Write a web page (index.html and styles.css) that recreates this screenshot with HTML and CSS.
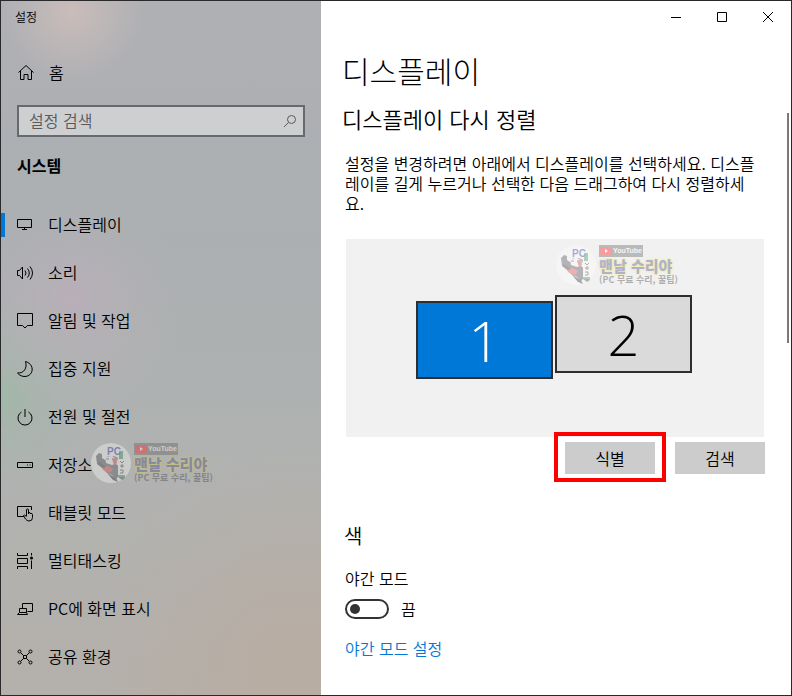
FILE: index.html
```html
<!DOCTYPE html>
<html lang="ko">
<head>
  <meta charset="UTF-8">
  <meta name="viewport" content="width=device-width, initial-scale=1.0">
  <title>설정</title>
  <link rel="stylesheet" href="styles.css">
</head>
<body>
  <svg class="defs" width="0" height="0" aria-hidden="true">
    <symbol id="channel-logo" viewBox="0 0 40 40">
      <circle cx="20" cy="20" r="20" fill="#fff"/>
      <path d="M5 13l3-3 3 1v4l3 2 3-4 4 1 2-1 4 2-2 6 4 3 2 5 3 6-3 2-4-3-2 2-4-4-5-2-5-5-5-4z" fill="#454550"/>
      <path d="M14 15l5-2 6 2 1 5-5 2-6-2z" fill="#fff"/>
      <path d="M15 16h3M21 16h3" stroke="#454550"/>
      <path d="M11 24l6-1 5 3-3 4-7-3zM21 16l4-1 1 5-3 2z" fill="#e23b3b"/>
      <path d="M16 30l9 5 2 4-5-2zM8 19l7 5-3 1-5-4z" fill="#22222c"/>
      <path d="M28 8h4v8h-4z" fill="#2f9a4a"/>
      <path d="M27 16h7v16h-7z" fill="#fff"/>
      <path d="M29 18l2 2 2-2M29 23h4M31 21v4M29 27h3v3h-3" fill="none" stroke="#333"/>
      <path d="M27 32h7v2h-7z" fill="#2f9a4a"/>
    </symbol>
  </svg>

  <div class="window">
    <aside class="sidebar">
      <div class="app-title">설정</div>
      <a class="home" href="#">
        <svg class="icon" viewBox="0 0 18 18"><path d="M2.5 9.5L10 2.500l7.500 7M4.500 8v8.500h3.500v-5h4v5h3.500V8"/></svg>
        <span>홈</span>
      </a>
      <div class="search">
        <input type="text" placeholder="설정 검색" aria-label="설정 검색">
        <svg class="search-icon" viewBox="0 0 14 14"><circle cx="8.500" cy="5.500" r="4"/><path d="M5.500 8.500L1 13"/></svg>
      </div>
      <h2 class="group">시스템</h2>
      <nav class="menu">
        <a class="active" href="#">
          <svg class="icon" viewBox="0 0 18 18"><path d="M1.500 3.500h14v8h-14zM8.500 11.500v2M6 13.500h5"/></svg>
          <span>디스플레이</span>
        </a>
        <a href="#">
          <svg class="icon" viewBox="0 0 18 18"><path d="M1.500 6.500h2l3-3.500v12l-3-3.500h-2zM9 6.500q2 2.500 0 5M11.500 4.500q3.500 4.500 0 9M14 2.500q5 6.500 0 13"/></svg>
          <span>소리</span>
        </a>
        <a href="#">
          <svg class="icon" viewBox="0 0 18 18"><path d="M1.500 1.500h15v12h-5L9 16l-2.500-2.500h-5z"/></svg>
          <span>알림 및 작업</span>
        </a>
        <a href="#">
          <svg class="icon" viewBox="0 0 18 18"><path d="M9.500 1.500C15 3 17.500 8 15.500 12.500C13 17.500 5.500 18 1.500 13C8 13.500 11.500 8 9.500 1.500z"/></svg>
          <span>집중 지원</span>
        </a>
        <a href="#">
          <svg class="icon" viewBox="0 0 18 18"><path d="M5.500 4A7 7 0 1 0 12.500 4M9 1v8"/></svg>
          <span>전원 및 절전</span>
        </a>
        <a href="#">
          <svg class="icon" viewBox="0 0 18 18"><path d="M1.500 6.500h15v5h-15zM11 9h1M13.500 9h1"/></svg>
          <span>저장소</span>
        </a>
        <a href="#">
          <svg class="icon" viewBox="0 0 18 18"><path d="M8 12.500H1.500v-10h14V6M10.500 12V6q0-1 1-1t1 1v4M12.500 8.500q2-.5 2 1.500M14.500 9.500q2-.5 2 1v3q0 3.500-3.500 3.500q-2 0-3.500-2l-2-3.500q.5-1.500 3 1"/></svg>
          <span>태블릿 모드</span>
        </a>
        <a href="#">
          <svg class="icon" viewBox="0 0 18 18"><path d="M1.500 1v2.500h10V1M1.500 6.500h10v5h-10zM1.500 17v-2.500h10V17M15.500 1v2.500M15.500 8.500V17"/><circle class="dot" cx="15.500" cy="6" r="1.500"/></svg>
          <span>멀티태스킹</span>
        </a>
        <a href="#">
          <svg class="icon" viewBox="0 0 18 18"><path d="M6.500 8V3.500h10v8h-5M3.500 12.500v-4h7v4M1.500 14.500l2-2h7l1 2z"/></svg>
          <span>PC에 화면 표시</span>
        </a>
        <a href="#">
          <svg class="icon" viewBox="0 0 18 18"><path d="M5 5l2.500 2.500M13 5l-2.500 2.500M5 13l2.500-2.500M13 13l-2.500-2.500M7.500 7.500h3v3h-3z"/><circle cx="3.500" cy="3.500" r="1.500"/><circle cx="14.500" cy="3.500" r="1.500"/><circle cx="3.500" cy="14.500" r="1.500"/><circle cx="14.500" cy="14.500" r="1.500"/></svg>
          <span>공유 환경</span>
        </a>
      </nav>
      <div class="watermark watermark-side">
        <div class="mark"><svg viewBox="0 0 40 40"><use href="#channel-logo"/></svg><b>PC</b></div>
        <div class="mark-text">
          <span class="tube"><svg viewBox="0 0 12 8"><rect width="12" height="8" rx="2" fill="#f00"/><path d="M5 2l3 2-3 2z" fill="#fff"/></svg>YouTube</span>
          <strong>맨날 수리야</strong>
          <small>(PC 무료 수리, 꿀팁)</small>
        </div>
      </div>
    </aside>

    <main class="content">
      <div class="window-buttons">
        <button type="button" aria-label="최소화"><svg viewBox="0 0 12 12"><path d="M1 6.500h10"/></svg></button>
        <button type="button" aria-label="최대화"><svg viewBox="0 0 12 12"><path d="M1.500 1.500h9v9h-9z"/></svg></button>
        <button type="button" aria-label="닫기"><svg viewBox="0 0 12 12"><path d="M1 1l10 10M11 1L1 11"/></svg></button>
      </div>
      <div class="page">
        <h1>디스플레이</h1>
        <h2>디스플레이 다시 정렬</h2>
        <p>설정을 변경하려면 아래에서 디스플레이를 선택하세요. 디스플레이를 길게 누르거나 선택한 다음 드래그하여 다시 정렬하세<br>요.</p>
        <div class="arrange">
          <button type="button" class="monitor selected">1</button>
          <button type="button" class="monitor">2</button>
          <div class="watermark watermark-main">
            <div class="mark"><svg viewBox="0 0 40 40"><use href="#channel-logo"/></svg><b>PC</b></div>
            <div class="mark-text">
              <span class="tube"><svg viewBox="0 0 12 8"><rect width="12" height="8" rx="2" fill="#f00"/><path d="M5 2l3 2-3 2z" fill="#fff"/></svg>YouTube</span>
              <strong>맨날 수리야</strong>
              <small>(PC 무료 수리, 꿀팁)</small>
            </div>
          </div>
        </div>
        <div class="actions">
          <button type="button" class="btn highlight">식별</button>
          <button type="button" class="btn">검색</button>
        </div>
        <h2 class="color-title">색</h2>
        <label class="night-label" for="night">야간 모드</label>
        <div class="toggle-row">
          <input type="checkbox" class="toggle" id="night">
          <span>끔</span>
        </div>
        <a class="link" href="#">야간 모드 설정</a>
      </div>
      <div class="scrollbar"></div>
    </main>
  </div>
</body>
</html>
```

FILE: styles.css
```css
* {
  box-sizing: border-box;
}
body {
  margin: 0;
  font-family: "Noto Sans CJK KR", sans-serif;
  font-size: 16px;
  font-weight: 350;
  line-height: 20px;
  color: #000;
}
h1, h2, p {
  margin: 0;
}
a {
  color: inherit;
  text-decoration: none;
}
button, input {
  font: inherit;
  color: inherit;
}
svg {
  fill: none;
  stroke: currentColor;
}
.defs {
  position: absolute;
}
.window {
  display: grid;
  grid-template-columns: 320px 1fr;
  min-height: 100vh;
  border: 1px solid #29282b;
}

/* sidebar */
.sidebar {
  position: relative;
  background:
    radial-gradient(circle at 72px 10px, rgba(205, 190, 187, 0.9) 0, rgba(205, 190, 187, 0.5) 30px, rgba(205, 190, 187, 0) 72px),
    radial-gradient(circle at 72px 300px, rgba(190, 174, 187, 0.7) 0, rgba(190, 178, 187, 0.3) 50px, rgba(190, 178, 187, 0) 110px),
    radial-gradient(circle at 0 396px, rgba(160, 184, 168, 0.9) 0, rgba(162, 183, 169, 0.4) 40px, rgba(162, 183, 169, 0) 100px),
    radial-gradient(circle at 300px 670px, rgba(186, 172, 160, 0.8) 0, rgba(186, 172, 160, 0) 220px),
    linear-gradient(#afb0b4 0, #abafb2 35%, #b0b2b1 65%, #b4b0ab 100%);
}
.app-title {
  padding: 6px 14px;
  font-size: 12px;
}
.home {
  display: flex;
  align-items: center;
  gap: 15px;
  height: 48px;
  margin-top: 15px;
  padding-left: 15px;
}
.icon {
  width: 18px;
  height: 18px;
  flex: none;
}
.dot {
  fill: #000;
  stroke: none;
}
.search {
  display: flex;
  align-items: center;
  height: 32px;
  margin: 9px 16px 0;
  padding: 0 6px 0 10px;
  border: 2px solid #68696c;
  background: rgba(255, 255, 255, 0.4);
}
.search input {
  flex: 1;
  min-width: 0;
  padding: 0 0 2px;
  border: 0;
  outline: 0;
  background: none;
}
.search input::placeholder {
  color: #58595b;
  opacity: 1;
}
.search-icon {
  width: 14px;
  height: 14px;
  color: #58595b;
}
.group {
  padding: 18px 16px 0;
  font-size: 16px;
  font-weight: 700;
}
.menu {
  margin-top: 26px;
}
.menu a {
  display: flex;
  align-items: center;
  gap: 14px;
  height: 48px;
  padding-left: 15px;
  position: relative;
}
.menu span {
  padding-bottom: 2px;
}
.menu .active::before {
  content: "";
  position: absolute;
  left: 0;
  top: 12px;
  width: 4px;
  height: 24px;
  background: #0078d7;
}

/* channel watermark */
.watermark {
  position: absolute;
  display: flex;
  gap: 3px;
  opacity: 0.35;
  pointer-events: none;
}
.watermark svg {
  stroke: none;
}
.watermark-side {
  left: 90px;
  top: 442px;
}
.watermark-main {
  right: 86px;
  top: 6px;
}
.mark {
  position: relative;
}
.mark svg {
  display: block;
  width: 40px;
  height: 40px;
}
.mark b {
  position: absolute;
  left: 16px;
  top: 3px;
  font: 700 10px/12px "Liberation Sans", sans-serif;
  color: #1c2a9a;
}
.mark-text {
  display: flex;
  flex-direction: column;
  align-items: flex-start;
  white-space: nowrap;
}
.tube {
  display: flex;
  align-items: center;
  gap: 1px;
  height: 12px;
  padding: 0 1px;
  background: #555;
  color: #fff;
  font: 700 7px/12px "Liberation Sans", sans-serif;
}
.tube svg {
  width: 12px;
  height: 8px;
}
.mark-text strong {
  font-size: 15px;
  font-weight: 900;
  line-height: 18px;
  color: #3c3c88;
  text-shadow: 0 0 2px #f5e600, 0 0 3px #f5e600;
}
.mark-text small {
  font-size: 9px;
  font-weight: 700;
  line-height: 10px;
  color: #333;
}

/* content */
.content {
  position: relative;
  background: #fff;
}
.window-buttons {
  display: flex;
  justify-content: flex-end;
}
.window-buttons button {
  display: flex;
  align-items: center;
  justify-content: center;
  width: 46px;
  height: 32px;
  padding: 0;
  border: 0;
  background: none;
}
.window-buttons svg {
  width: 12px;
  height: 12px;
}
.page {
  padding: 17px 26px 24px 24px;
}
.page h1 {
  margin-left: -3px;
  font-size: 30px;
  font-weight: 300;
  line-height: 40px;
}
.page h2 {
  margin: 14px 0 0 -3px;
  font-size: 22px;
  font-weight: 350;
  line-height: 28px;
}
.page p {
  margin-top: 21px;
}
.arrange {
  position: relative;
  display: flex;
  justify-content: center;
  align-items: flex-start;
  gap: 2px;
  height: 198px;
  margin: 26px 1px 0;
  padding: 56px 2px 0 0;
  background: #f1f1f1;
}
.monitor {
  width: 137px;
  height: 78px;
  padding: 0;
  border: 2px solid #2e2e2e;
  background: #dadada;
  font: 300 56px/72px "Open Sans", sans-serif;
}
.monitor.selected {
  margin-top: 6px;
  background: #0078d7;
  color: #fff;
}
.actions {
  display: flex;
  justify-content: flex-end;
  gap: 20px;
  margin-top: 5px;
}
.btn {
  position: relative;
  width: 90px;
  height: 32px;
  padding: 0;
  border: 0;
  background: #ccc;
}
.highlight::after {
  content: "";
  position: absolute;
  inset: -10px -11px -8px;
  border: 4px solid #f00;
}
.page .color-title {
  margin: 48px 0 0 -1px;
  font-size: 20px;
}
.night-label {
  display: block;
  margin-top: 18px;
}
.toggle-row {
  display: flex;
  align-items: center;
  gap: 12px;
  margin-top: 11px;
}
.toggle {
  appearance: none;
  display: flex;
  align-items: center;
  width: 44px;
  height: 20px;
  margin: 0;
  padding: 0 3px;
  border: 2px solid #333;
  border-radius: 10px;
}
.toggle::before {
  content: "";
  width: 10px;
  height: 10px;
  border-radius: 50%;
  background: #333;
}
.toggle:checked {
  justify-content: flex-end;
}
.link {
  display: inline-block;
  margin-top: 19px;
  color: #0078d7;
}
.scrollbar {
  position: absolute;
  top: 112px;
  right: 2px;
  width: 2px;
  height: 230px;
  background: #7a7a7a;
}
```
